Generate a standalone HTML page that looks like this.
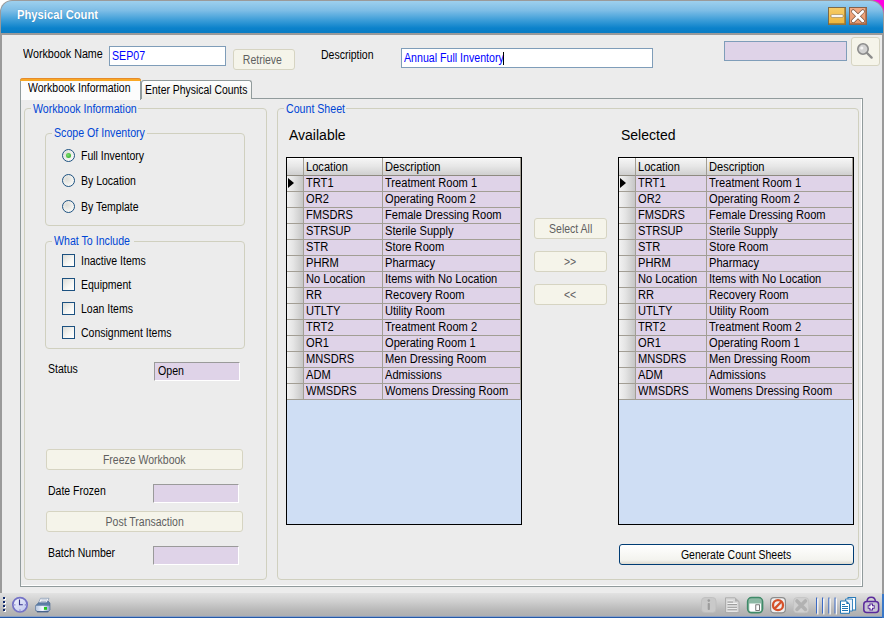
<!DOCTYPE html>
<html><head><meta charset="utf-8"><title>Physical Count</title>
<style>
*{box-sizing:border-box;margin:0;padding:0}
html,body{width:884px;height:618px;overflow:hidden;background:#ECECEC}
body{font-family:"Liberation Sans",sans-serif;font-size:11px;color:#000;position:relative}
.a{position:absolute}
#frame{left:0;top:0;width:884px;height:618px;background:#9A9A9A}
#cornerL{left:0;top:0;width:12px;height:12px;background:#fff}
#cornerR{right:0;top:0;width:14px;height:14px;background:#FF00E1}
#title{left:1px;top:1px;width:882px;height:32px;border-radius:11px 13px 0 0;background:linear-gradient(#9ED0EE 0%,#7DBDE6 30%,#3C9DD8 60%,#0B82CB 85%,#0A7CC4 100%);}
#title b{position:absolute;left:16px;top:7px;color:#fff;font-size:12px;font-weight:bold;transform:scaleX(.935);transform-origin:0 0;white-space:nowrap;text-shadow:0 0 1px rgba(0,60,120,.4)}
#tl{left:0;top:0;width:884px;height:34px;border-radius:12px 14px 0 0;background:#9A9A9A}
#body{left:2px;top:35px;width:880px;height:558px;background:#ECECEC}
#status{left:0;top:593px;width:882px;height:24px;background:linear-gradient(#E2E2E2 0%,#CFCFCF 35%,#B9B9B9 70%,#ADADAD 100%)}
#botline{left:0;top:616px;width:884px;height:2px;background:linear-gradient(#8BA0C4 0%,#8BA0C4 45%,#2459A8 55%,#2459A8 100%)}
#rstrip{left:882px;top:594px;width:2px;height:24px;background:#3A78C8}
.lbl{position:absolute;white-space:nowrap;line-height:14px;font-size:12px;transform:scaleX(.875);transform-origin:0 0}
.inp{position:absolute;background:#fff;border:1px solid #7F9DB9;color:#0000FF;white-space:nowrap;line-height:14px;padding:2px 0 0 2px;font-size:12px}
.inp>u{display:inline-block;text-decoration:none;transform:scaleX(.885);transform-origin:0 0}
.lav{position:absolute;background:#DFD3E8;border:1px solid #7F9DB9}
.lav2{position:absolute;background:#DFD3E8;border:1px solid;border-color:#9A9A9A #fff #fff #9A9A9A;line-height:13px;padding:2px 0 0 3px}
.btnd,.btn{font-size:12px}
.btnd>u,.btn>u{display:inline-block;text-decoration:none;transform:scaleX(.875);position:relative;top:1px}
.btnd{position:absolute;background:#F5F4EA;border:1px solid #D6D4C2;border-radius:3px;color:#5F5F5F;text-align:center;white-space:nowrap}
.btn{position:absolute;background:linear-gradient(#FFFFFF,#F3F3EE 80%,#DDDACF);border:1px solid #003C74;border-radius:3px;color:#000;text-align:center;white-space:nowrap}
.gb{position:absolute;border:1px solid #D0D0BF;border-radius:4px}
.gb>em{position:absolute;height:14px;overflow:visible;top:-7px;left:6px;font-style:normal;color:#0046D5;background:#ECECEC;padding:0 2px 0 2px;line-height:14px;white-space:nowrap;font-size:12px}
.gb>em>s{display:inline-block;text-decoration:none;transform:scaleX(.885);transform-origin:0 0}
.radio{position:absolute;width:13px;height:13px;border-radius:50%;border:1px solid #1C5180;background:radial-gradient(circle at 35% 35%,#DCDCD7,#F7F7F4 70%,#fff)}
.radio.on:after{content:"";position:absolute;left:3px;top:3px;width:5px;height:5px;border-radius:50%;background:radial-gradient(circle at 40% 40%,#7CE06B,#21A121)}
.chk{position:absolute;width:13px;height:13px;border:1px solid #1C5180;background:linear-gradient(135deg,#DCDCD7,#F7F7F4 60%,#fff)}
.grid{position:absolute;border:1px solid #000;background:#CFDEF4;overflow:hidden}
.gh{position:absolute;height:18px;background:linear-gradient(#F6F6F6,#E6E6E6 50%,#CFCFCF);border-right:1px solid #A29E94;border-bottom:1px solid #8E8A80;box-shadow:inset 0 1px 0 #fff}
.gh span{top:2px !important}
.gh span,.gc span{position:absolute;left:2px;top:0px;white-space:nowrap;line-height:14px;font-size:12px;transform:scaleX(.925);transform-origin:0 0}
.gc{position:absolute;height:16px;background:#DFD3E8;border-right:1px solid #A29E94;border-bottom:1px solid #A29E94;box-sizing:content-box;height:15px}
.rh{position:absolute;left:0;width:17px;height:16px;background:linear-gradient(90deg,#F2F2F2,#E4E4E4 40%,#C6C6C6);border-right:1px solid #A29E94;border-bottom:1px solid #A29E94}
.rh i{position:absolute;left:1px;top:2px;width:0;height:0;border-left:6px solid #000;border-top:5.5px solid transparent;border-bottom:5.5px solid transparent}
.big{font-size:14px;line-height:16px;transform:none}
</style></head><body>
<div id="frame" class="a"></div>
<div id="cornerL" class="a"></div><div id="cornerR" class="a"></div>
<div id="tl" class="a"></div>
<div id="title" class="a"><b>Physical Count</b>
  <svg class="a" style="left:827px;top:6px" width="18" height="18" viewBox="0 0 18 18"><defs><linearGradient id="mg" x1="0" y1="0" x2="0" y2="1"><stop offset="0" stop-color="#F6CC66"/><stop offset="1" stop-color="#EDB53E"/></linearGradient><linearGradient id="xg" x1="0" y1="0" x2="0" y2="1"><stop offset="0" stop-color="#F2AC86"/><stop offset="1" stop-color="#EA9A6E"/></linearGradient></defs><rect x="0" y="0" width="18" height="18" fill="#7E6A48"/><rect x="1" y="1" width="16" height="16" fill="url(#mg)"/><path d="M1 17 H17 V1" fill="none" stroke="#9C7A34" stroke-width="1.4"/><rect x="2.8" y="7.6" width="12.6" height="2.8" rx="1.4" fill="#fff" stroke="#8a7040" stroke-width=".6"/></svg>
  <svg class="a" style="left:848px;top:6px" width="18" height="18" viewBox="0 0 18 18"><rect x="0" y="0" width="18" height="18" fill="#85604A"/><rect x="1" y="1" width="16" height="16" fill="url(#xg)"/><path d="M1 17 H17 V1" fill="none" stroke="#A06848" stroke-width="1.4"/><path d="M4.2 4.4 L13.8 14 M13.8 4.4 L4.2 14" stroke="#6e4a34" stroke-width="4" stroke-linecap="round"/><path d="M4.2 4.4 L13.8 14 M13.8 4.4 L4.2 14" stroke="#fff" stroke-width="2.8" stroke-linecap="round"/></svg>
</div>
<div id="body" class="a"></div>

<!-- top row -->
<div class="lbl" style="left:23px;top:46.5px;transform:scaleX(.895)">Workbook Name</div>
<div class="inp" style="left:109px;top:46px;width:117px;height:20px"><u>SEP07</u></div>
<div class="btnd" style="left:233px;top:49px;width:62px;height:21px;line-height:19px;padding-right:3px"><u>Retrieve</u></div>
<div class="lbl" style="left:321px;top:48px">Description</div>
<div class="inp" style="left:401px;top:48px;width:252px;height:20px"><u>Annual Full Inventory</u><span style="position:absolute;left:101px;top:3px;width:1px;height:13px;background:#000"></span></div>
<div class="lav" style="left:724px;top:41px;width:123px;height:20px"></div>
<div class="btnd" style="left:851px;top:37px;width:29px;height:29px">
 <svg width="27" height="27" viewBox="0 0 27 27"><circle cx="11" cy="11" r="5.2" fill="#D2D2D2" stroke="#8C8C8C" stroke-width="1.6"/><circle cx="9.8" cy="10" r="1.6" fill="#F4F4F4"/><path d="M15 15 L19.6 19.6" stroke="#8C8C8C" stroke-width="2.4" stroke-linecap="round"/></svg>
</div>

<!-- tabs -->
<div class="a" style="left:20px;top:98px;width:843px;height:489px;border:1px solid #919B9C;border-color:#919B9C;background:#ECECEC;box-shadow:inset -1px -1px 0 #fff"></div>
<div class="a" style="left:141px;top:80px;width:111px;height:19px;border:1px solid #919B9C;border-bottom:none;border-radius:3px 3px 0 0;background:linear-gradient(#FFFFFF,#F3F3F0 60%,#ECECE6)"><span class="lbl" style="left:3px;top:2px;transform:scaleX(.868)">Enter Physical Counts</span></div>
<div class="a" style="left:20px;top:78px;width:121px;height:22px;border:1px solid #919B9C;border-bottom:none;border-top:none;border-radius:3px 3px 0 0;background:#FCFCFC"><div class="a" style="left:-1px;top:0;width:121px;height:3px;background:#F9A825;border-radius:3px 3px 0 0;border-top:1px solid #E68B2C"></div><span class="lbl" style="left:7px;top:3px">Workbook Information</span></div>

<!-- left groupbox -->
<div class="gb" style="left:24px;top:108px;width:243px;height:472px"><em style="width:107px"><s>Workbook Information</s></em></div>
<div class="gb" style="left:45px;top:133px;width:200px;height:93px"><em style="width:95px;top:-8px"><s>Scope Of Inventory</s></em></div>
<div class="radio on" style="left:62px;top:149px"></div><div class="lbl" style="left:81px;top:149px">Full Inventory</div>
<div class="radio" style="left:62px;top:174px"></div><div class="lbl" style="left:81px;top:174px">By Location</div>
<div class="radio" style="left:62px;top:200px"></div><div class="lbl" style="left:81px;top:200px">By Template</div>
<div class="gb" style="left:45px;top:241px;width:200px;height:108px"><em style="width:82px;top:-8px"><s>What To Include</s></em></div>
<div class="chk" style="left:62px;top:254px"></div><div class="lbl" style="left:81px;top:254px">Inactive Items</div>
<div class="chk" style="left:62px;top:278px"></div><div class="lbl" style="left:81px;top:278px">Equipment</div>
<div class="chk" style="left:62px;top:302px"></div><div class="lbl" style="left:81px;top:302px">Loan Items</div>
<div class="chk" style="left:62px;top:326px"></div><div class="lbl" style="left:81px;top:326px">Consignment Items</div>
<div class="lbl" style="left:48px;top:362px">Status</div>
<div class="lav2" style="left:154px;top:362px;width:86px;height:19px"><u style="display:inline-block;text-decoration:none;transform:scaleX(.885);transform-origin:0 0;font-size:12px">Open</u></div>
<div class="btnd" style="left:46px;top:449px;width:197px;height:21px;line-height:19px"><u>Freeze Workbook</u></div>
<div class="lbl" style="left:48px;top:484px">Date Frozen</div>
<div class="lav2" style="left:153px;top:484px;width:86px;height:19px"></div>
<div class="btnd" style="left:46px;top:511px;width:197px;height:21px;line-height:19px"><u>Post Transaction</u></div>
<div class="lbl" style="left:48px;top:546px">Batch Number</div>
<div class="lav2" style="left:153px;top:546px;width:86px;height:19px"></div>

<!-- right groupbox -->
<div class="gb" style="left:277px;top:108px;width:582px;height:472px"><em style="width:62px"><s>Count Sheet</s></em></div>
<div class="lbl big" style="left:289px;top:127px;font-size:14px">Available</div>
<div class="lbl big" style="left:621px;top:127px;font-size:14px">Selected</div>
<div class="grid" style="left:286px;top:157px;width:236px;height:368px"><div class="gh" style="left:0;top:0;width:17px"></div><div class="gh" style="left:17px;top:0;width:79px"><span>Location</span></div><div class="gh" style="left:96px;top:0;width:138px"><span>Description</span></div><div class="rh" style="top:18px"><i></i></div><div class="gc" style="left:17px;top:18px;width:78px"><span>TRT1</span></div><div class="gc" style="left:96px;top:18px;width:137px"><span>Treatment Room 1</span></div><div class="rh" style="top:34px"></div><div class="gc" style="left:17px;top:34px;width:78px"><span>OR2</span></div><div class="gc" style="left:96px;top:34px;width:137px"><span>Operating Room 2</span></div><div class="rh" style="top:50px"></div><div class="gc" style="left:17px;top:50px;width:78px"><span>FMSDRS</span></div><div class="gc" style="left:96px;top:50px;width:137px"><span>Female Dressing Room</span></div><div class="rh" style="top:66px"></div><div class="gc" style="left:17px;top:66px;width:78px"><span>STRSUP</span></div><div class="gc" style="left:96px;top:66px;width:137px"><span>Sterile Supply</span></div><div class="rh" style="top:82px"></div><div class="gc" style="left:17px;top:82px;width:78px"><span>STR</span></div><div class="gc" style="left:96px;top:82px;width:137px"><span>Store Room</span></div><div class="rh" style="top:98px"></div><div class="gc" style="left:17px;top:98px;width:78px"><span>PHRM</span></div><div class="gc" style="left:96px;top:98px;width:137px"><span>Pharmacy</span></div><div class="rh" style="top:114px"></div><div class="gc" style="left:17px;top:114px;width:78px"><span>No Location</span></div><div class="gc" style="left:96px;top:114px;width:137px"><span>Items with No Location</span></div><div class="rh" style="top:130px"></div><div class="gc" style="left:17px;top:130px;width:78px"><span>RR</span></div><div class="gc" style="left:96px;top:130px;width:137px"><span>Recovery Room</span></div><div class="rh" style="top:146px"></div><div class="gc" style="left:17px;top:146px;width:78px"><span>UTLTY</span></div><div class="gc" style="left:96px;top:146px;width:137px"><span>Utility Room</span></div><div class="rh" style="top:162px"></div><div class="gc" style="left:17px;top:162px;width:78px"><span>TRT2</span></div><div class="gc" style="left:96px;top:162px;width:137px"><span>Treatment Room 2</span></div><div class="rh" style="top:178px"></div><div class="gc" style="left:17px;top:178px;width:78px"><span>OR1</span></div><div class="gc" style="left:96px;top:178px;width:137px"><span>Operating Room 1</span></div><div class="rh" style="top:194px"></div><div class="gc" style="left:17px;top:194px;width:78px"><span>MNSDRS</span></div><div class="gc" style="left:96px;top:194px;width:137px"><span>Men Dressing Room</span></div><div class="rh" style="top:210px"></div><div class="gc" style="left:17px;top:210px;width:78px"><span>ADM</span></div><div class="gc" style="left:96px;top:210px;width:137px"><span>Admissions</span></div><div class="rh" style="top:226px"></div><div class="gc" style="left:17px;top:226px;width:78px"><span>WMSDRS</span></div><div class="gc" style="left:96px;top:226px;width:137px"><span>Womens Dressing Room</span></div></div>
<div class="grid" style="left:618px;top:157px;width:236px;height:368px"><div class="gh" style="left:0;top:0;width:17px"></div><div class="gh" style="left:17px;top:0;width:71px"><span>Location</span></div><div class="gh" style="left:88px;top:0;width:146px"><span>Description</span></div><div class="rh" style="top:18px"><i></i></div><div class="gc" style="left:17px;top:18px;width:70px"><span>TRT1</span></div><div class="gc" style="left:88px;top:18px;width:145px"><span>Treatment Room 1</span></div><div class="rh" style="top:34px"></div><div class="gc" style="left:17px;top:34px;width:70px"><span>OR2</span></div><div class="gc" style="left:88px;top:34px;width:145px"><span>Operating Room 2</span></div><div class="rh" style="top:50px"></div><div class="gc" style="left:17px;top:50px;width:70px"><span>FMSDRS</span></div><div class="gc" style="left:88px;top:50px;width:145px"><span>Female Dressing Room</span></div><div class="rh" style="top:66px"></div><div class="gc" style="left:17px;top:66px;width:70px"><span>STRSUP</span></div><div class="gc" style="left:88px;top:66px;width:145px"><span>Sterile Supply</span></div><div class="rh" style="top:82px"></div><div class="gc" style="left:17px;top:82px;width:70px"><span>STR</span></div><div class="gc" style="left:88px;top:82px;width:145px"><span>Store Room</span></div><div class="rh" style="top:98px"></div><div class="gc" style="left:17px;top:98px;width:70px"><span>PHRM</span></div><div class="gc" style="left:88px;top:98px;width:145px"><span>Pharmacy</span></div><div class="rh" style="top:114px"></div><div class="gc" style="left:17px;top:114px;width:70px"><span>No Location</span></div><div class="gc" style="left:88px;top:114px;width:145px"><span>Items with No Location</span></div><div class="rh" style="top:130px"></div><div class="gc" style="left:17px;top:130px;width:70px"><span>RR</span></div><div class="gc" style="left:88px;top:130px;width:145px"><span>Recovery Room</span></div><div class="rh" style="top:146px"></div><div class="gc" style="left:17px;top:146px;width:70px"><span>UTLTY</span></div><div class="gc" style="left:88px;top:146px;width:145px"><span>Utility Room</span></div><div class="rh" style="top:162px"></div><div class="gc" style="left:17px;top:162px;width:70px"><span>TRT2</span></div><div class="gc" style="left:88px;top:162px;width:145px"><span>Treatment Room 2</span></div><div class="rh" style="top:178px"></div><div class="gc" style="left:17px;top:178px;width:70px"><span>OR1</span></div><div class="gc" style="left:88px;top:178px;width:145px"><span>Operating Room 1</span></div><div class="rh" style="top:194px"></div><div class="gc" style="left:17px;top:194px;width:70px"><span>MNSDRS</span></div><div class="gc" style="left:88px;top:194px;width:145px"><span>Men Dressing Room</span></div><div class="rh" style="top:210px"></div><div class="gc" style="left:17px;top:210px;width:70px"><span>ADM</span></div><div class="gc" style="left:88px;top:210px;width:145px"><span>Admissions</span></div><div class="rh" style="top:226px"></div><div class="gc" style="left:17px;top:226px;width:70px"><span>WMSDRS</span></div><div class="gc" style="left:88px;top:226px;width:145px"><span>Womens Dressing Room</span></div></div>
<div class="btnd" style="left:534px;top:218px;width:73px;height:21px;line-height:19px"><u>Select All</u></div>
<div class="btnd" style="left:534px;top:251px;width:73px;height:21px;line-height:19px"><u>&gt;&gt;</u></div>
<div class="btnd" style="left:534px;top:284px;width:73px;height:21px;line-height:19px"><u>&lt;&lt;</u></div>
<div class="btn" style="left:619px;top:544px;width:235px;height:21px;line-height:19px"><u>Generate Count Sheets</u></div>

<!-- status bar -->
<div id="status" class="a"></div>
<div id="botline" class="a"></div><div id="rstrip" class="a"></div>

<!-- status icons -->
<svg class="a" style="left:0;top:593px" width="60" height="25" viewBox="0 0 60 25">
 <g fill="#fff"><rect x="4" y="5" width="2" height="2"/><rect x="4" y="9" width="2" height="2"/><rect x="4" y="13" width="2" height="2"/><rect x="4" y="17" width="2" height="2"/></g>
 <g fill="#10296B"><rect x="3" y="4" width="2" height="2"/><rect x="3" y="8" width="2" height="2"/><rect x="3" y="12" width="2" height="2"/><rect x="3" y="16" width="2" height="2"/></g>
 <defs><linearGradient id="cg" x1="0" y1="0" x2="1" y2="1"><stop offset="0" stop-color="#F4F6FE"/><stop offset="1" stop-color="#BCC4EC"/></linearGradient>
 <linearGradient id="pg" x1="0" y1="0" x2="1" y2="0"><stop offset="0" stop-color="#B8C8E0"/><stop offset=".5" stop-color="#F4F8FF"/><stop offset="1" stop-color="#8CA4C8"/></linearGradient></defs>
 <circle cx="20" cy="11.8" r="7.2" fill="url(#cg)" stroke="#7472C6" stroke-width="1.7"/>
 <path d="M19.5 6.6 V11.7 H22.8" fill="none" stroke="#34328A" stroke-width="1.1"/>
 <g fill="#6A68C0"><rect x="19.5" y="16.5" width="1" height="1.2"/><rect x="14.2" y="11.4" width="1.2" height="1"/><rect x="24.8" y="11.4" width="1.2" height="1"/></g>
 <!-- printer -->
 <path d="M40.5 5.3 L49 5.3 L46.8 10.2 L38.3 10.2 Z" fill="#F6F8FC" stroke="#8C9CB4" stroke-width=".8"/>
 <path d="M41.3 6.9 H47 M40.6 8.5 H46.3" stroke="#A4B0C4" stroke-width=".8"/>
 <path d="M35.6 12.6 L38.5 9.8 L47.2 9.8 L48 8 L50 10 L50 16.8 L48.2 18.8 L37.2 18.8 L35.6 17.2 Z" fill="#5E7EA6" stroke="#46648E" stroke-width=".6"/>
 <path d="M35.8 12.8 H49.6 V17 L48 18.2 H37.4 L35.8 16.8 Z" fill="url(#pg)"/>
 <rect x="44" y="14" width="3" height="2.8" fill="#22C81E"/>
 <path d="M37 18.7 H48.2" stroke="#3E5A86" stroke-width="1.1"/>
</svg>
<svg class="a" style="left:696px;top:593px" width="188" height="25" viewBox="0 0 188 25">
 <!-- info (x 701.6..715.7 => 5.6..19.7) -->
 <rect x="5.5" y="4.5" width="14.5" height="15" rx="3.5" fill="#C9C9C9" stroke="#BDBDBD" stroke-width=".8"/>
 <circle cx="12.8" cy="7.6" r="1.3" fill="#9C9C9C"/><rect x="11.7" y="10" width="2.2" height="7" rx=".8" fill="#9C9C9C"/>
 <!-- doc (724.7..739.4 => 28.7..43.4) -->
 <path d="M29.5 4.8 H39 L43 8.6 V19.6 H29.5 Z" fill="#D8D8D8" stroke="#A8A8A8" stroke-width=".9"/>
 <path d="M39 4.8 V8.6 H43 Z" fill="#B0B0B0"/>
 <path d="M31.5 8 H37 M31.5 10.6 H41 M31.5 13.2 H41 M31.5 15.8 H41 M31.5 18 H41" stroke="#F4F4F4" stroke-width="1.1"/>
 <path d="M31.5 9 H37 M31.5 11.6 H41 M31.5 14.2 H41 M31.5 16.8 H41" stroke="#8E8E8E" stroke-width=".9"/>
 <!-- green (746.9..763.2 => 50.9..67.2) -->
 <rect x="51.6" y="4.6" width="15" height="15.2" rx="4" fill="#8DB8A4" stroke="#3F8A68" stroke-width="1.5"/>
 <path d="M53.3 10.5 H65 V17 Q65 18.4 63.6 18.4 H54.7 Q53.3 18.4 53.3 17 Z" fill="#fff"/>
 <rect x="59.8" y="11.8" width="3.6" height="5.6" fill="#fff" stroke="#555" stroke-width=".8"/>
 <!-- red (770.4..785.4 => 74.4..89.4) -->
 <rect x="74.6" y="4.6" width="14.8" height="15.2" rx="3.5" fill="#F0F0F0" stroke="#8C8C8C" stroke-width="1.2"/>
 <circle cx="82" cy="12.2" r="5" fill="none" stroke="#D5512A" stroke-width="2.3"/>
 <path d="M78.6 15.6 L85.4 8.8" stroke="#D5512A" stroke-width="2.3"/>
 <!-- X gray (793.3..808.9 => 97.3..112.9) -->
 <rect x="97.6" y="4.6" width="15" height="15.2" rx="3.5" fill="#D0D0D0" stroke="#C2C2C2" stroke-width=".8"/>
 <path d="M101 8 L109.4 16.4 M109.4 8 L101 16.4" stroke="#B2B2B2" stroke-width="3.6" stroke-linecap="round"/>
 <!-- bars: 816.4 822.5 828.8 835 => 120.4 126.5 132.8 139 -->
 <g fill="#3C6AC4"><rect x="120" y="4.5" width="1.2" height="16"/><rect x="126" y="4.5" width="1.2" height="16"/><rect x="132.3" y="4.5" width="1.2" height="16"/><rect x="138.5" y="4.5" width="1.2" height="16"/></g>
 <g fill="#fff"><rect x="121.2" y="5.5" width="1.2" height="16"/><rect x="127.2" y="5.5" width="1.2" height="16"/><rect x="133.5" y="5.5" width="1.2" height="16"/><rect x="139.7" y="5.5" width="1.2" height="16"/></g>
 <!-- docs (840..856 => 144..160) -->
 <rect x="152" y="4.5" width="7.6" height="12.5" fill="#fff" stroke="#2A7AB8" stroke-width="1"/>
 <path d="M149.5 6 L156.5 6 L156.5 18 L149.5 18 Z" fill="#E8F0FA" stroke="#2A7AB8" stroke-width=".9"/>
 <path d="M144.5 8 H150.3 L153.5 11 V20.3 H144.5 Z" fill="#fff" stroke="#1E74B4" stroke-width="1"/>
 <path d="M150.3 8 V11 H153.5 Z" fill="#1E74B4"/>
 <path d="M146 11.5 H149 M146 13.5 H152 M146 15.5 H152 M146 17.5 H152" stroke="#1E74B4" stroke-width="1"/>
 <!-- purple (863.2..879 => 167.2..183) -->
 <path d="M171 9 Q171 4.3 175.2 4.3 Q179.4 4.3 179.4 9" fill="none" stroke="#5A2A9C" stroke-width="1.4"/>
 <rect x="167.8" y="8.6" width="14.8" height="10.8" rx="3" fill="#C8C4D4" stroke="#5A2A9C" stroke-width="1.5"/>
 <path d="M175.2 10.5 V17.5 M171.7 14 H178.7" stroke="#5A2A9C" stroke-width="3.6"/>
 <path d="M175.2 11.4 V16.6 M172.6 14 H177.8" stroke="#fff" stroke-width="1.5"/>
</svg>
</body></html>
